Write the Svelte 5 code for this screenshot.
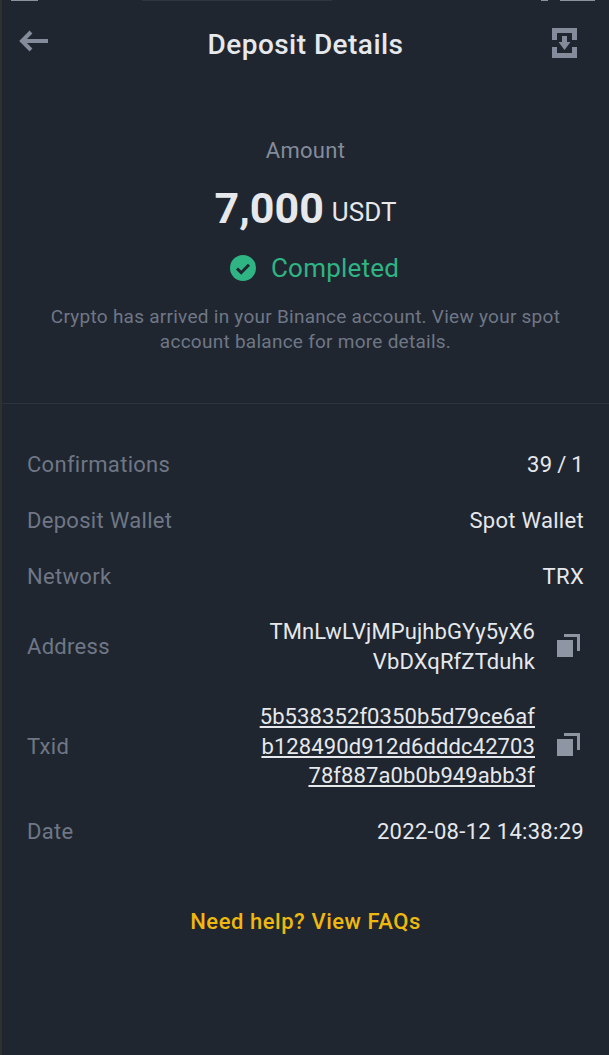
<script>
  const rows = [
    { label: 'Confirmations', value: '39 / 1', tight: true },
    { label: 'Deposit Wallet', value: 'Spot Wallet', tight: false },
    { label: 'Network', value: 'TRX', tight: false }
  ];
</script>

<main class="page">
  <div class="status" aria-hidden="true">
    <i class="s1"></i><i class="s2"></i><i class="s4"></i><i class="s3"></i>
  </div>
  <header class="top">
    <svg class="back" viewBox="0 0 30 24" width="30" height="24">
      <path d="M12 3 3 12l9 9M3 12h26" fill="none" stroke="#848c9b" stroke-width="4"/>
    </svg>
    <h1>Deposit Details</h1>
    <svg class="save" viewBox="0 0 25 30" width="25" height="30">
      <path d="M0 0h25v12h-5V5H5v7H0zM0 19h5v6h15v-6h5v11H0z" fill="#848c9b"/>
      <path d="M10 8h5v6h3.500l-6 8-6-8H10z" fill="#848c9b"/>
    </svg>
  </header>

  <section class="summary">
    <div class="amount-label">Amount</div>
    <div class="amount"><strong>7,000</strong><span>USDT</span></div>
    <div class="state">
      <svg viewBox="0 0 26 26" width="26" height="26">
        <circle cx="13" cy="13" r="13" fill="#2fb483"/>
        <path d="M7 13.500l4.200 4.200L19 9.800" fill="none" stroke="#1f2630" stroke-width="3"/>
      </svg>
      <span>Completed</span>
    </div>
    <p>Crypto has arrived in your Binance account. View your spot account balance for more details.</p>
  </section>

  <section class="details">
    {#each rows as row}
      <div class="row"><span class="key">{row.label}</span><span class="val" class:tight={row.tight}>{row.value}</span></div>
    {/each}
    <div class="row multi">
      <span class="key">Address</span>
      <div class="end">
        <span class="val right">TMnLwLVjMPujhbGYy5yX6<br />VbDXqRfZTduhk</span>
        {@render copy()}
      </div>
    </div>
    <div class="row multi">
      <span class="key">Txid</span>
      <div class="end">
        <span class="val right link">5b538352f0350b5d79ce6af<br />b128490d912d6dddc42703<br />78f887a0b0b949abb3f</span>
        {@render copy()}
      </div>
    </div>
    <div class="row"><span class="key">Date</span><span class="val">2022-08-12 14:38:29</span></div>
  </section>

  <div class="help">Need help? View FAQs</div>
</main>

{#snippet copy()}
  <svg class="copy" viewBox="0 0 23 25" width="23" height="25">
    <path d="M7 1h16v17h-3V4H7z" fill="#8f96a3"/>
    <rect x="0" y="7" width="16" height="17" fill="#8f96a3"/>
  </svg>
{/snippet}

<style>
  :global(body) { margin: 0; background: #1f2630; }
  .page {
    position: relative;
    height: 1055px;
    overflow: hidden;
    background: #1f2630;
    color: #e6e8ec;
    font-family: Roboto, "Liberation Sans", sans-serif;
    border-left: 2px solid #2d3130;
    box-sizing: border-box;
  }
  .status { position: absolute; inset: 0 0 auto 0; height: 2px; }
  .status i { position: absolute; top: 0; height: 1px; background: #8d929a; }
  .s1 { left: 9px; width: 27px; }
  .s2 { left: 140px; width: 190px; opacity: .15; }
  .s4 { left: 539px; width: 7px; }
  .s3 { left: 558px; width: 35px; height: 2px; }
  .top {
    display: flex;
    align-items: flex-start;
    justify-content: space-between;
    padding: 29px 32px 0 17px;
    height: 60px;
    box-sizing: border-box;
    position: relative;
  }
  .save { margin-top: -1px; }
  .top h1 {
    position: absolute;
    left: 0; right: 0; top: 28px;
    margin: 0;
    text-align: center;
    font-size: 28px;
    line-height: 34px;
    font-weight: 500;
    letter-spacing: .45px;
  }
  .summary { text-align: center; padding-top: 77px; height: 344px; box-sizing: border-box; border-bottom: 1px solid #2c333d; }
  .amount-label { color: #848c9b; font-size: 22px; line-height: 28px; letter-spacing: .3px; }
  .amount { margin-top: 15px; line-height: 56px; height: 56px; }
  .amount strong { font-size: 43px; font-weight: 700; }
  .amount span { font-size: 26px; vertical-align: 2px; margin-left: 8px; }
  .state { display: flex; align-items: center; justify-content: center; gap: 15px; color: #2fb483; font-size: 26px; line-height: 34px; margin-top: 15px; padding-left: 18px; letter-spacing: .2px; }
  .summary p { margin: 19px 46px 0; color: #6f7786; font-size: 19px; line-height: 25px; letter-spacing: .26px; }
  .details { padding: 32px 25px 0 25px; }
  .row { display: flex; justify-content: space-between; align-items: center; min-height: 56px; font-size: 22px; letter-spacing: .3px; box-sizing: border-box; }
  .key { color: #6f7786; }
  .val { color: #e6e8ec; }
  .tight { word-spacing: -1px; }
  .end { display: flex; align-items: center; gap: 22px; margin-right: 4px; }
  .copy { margin-top: -3px; }
  .right { text-align: right; line-height: 29.5px; letter-spacing: .1px; }
  .multi { padding: 13px 0; }
  .link { text-decoration: underline; }
  .help { margin-top: 49px; text-align: center; color: #eeb80f; font-size: 22px; font-weight: 500; letter-spacing: .55px; }
</style>
